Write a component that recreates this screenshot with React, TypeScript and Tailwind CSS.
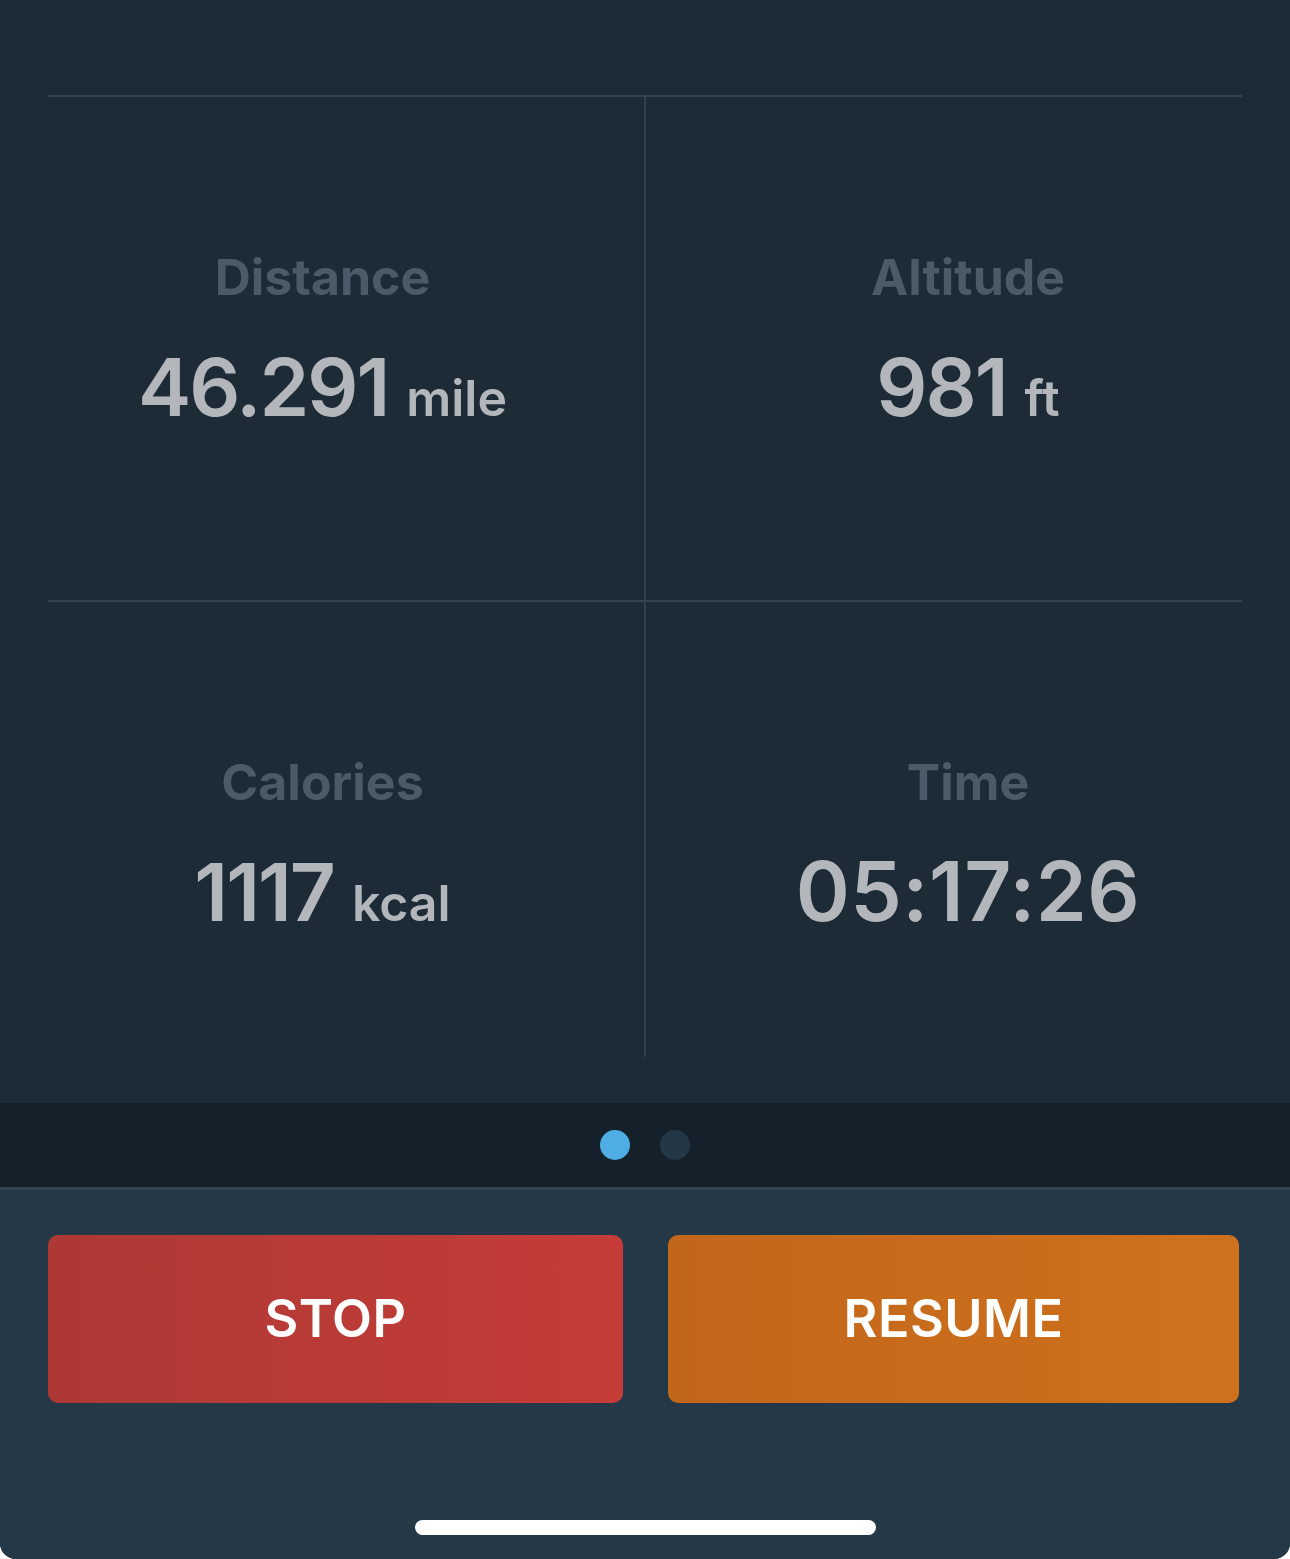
import React from "react";

function Stat({
  label,
  value,
  unit,
  wide,
}: {
  label: string;
  value: string;
  unit?: string;
  wide?: boolean;
}) {
  return (
    <div className="flex flex-col items-center pt-[155px]">
      <div className="text-[50px] leading-[50px] font-bold text-[#4a5a67]">{label}</div>
      <div className="mt-[45px] flex items-baseline text-[#b3b7bb]">
        <span
          className={
            wide
              ? "text-[82px] leading-[80px] font-semibold tracking-[0.5px]"
              : "text-[80px] leading-[80px] font-semibold tracking-[-2px]"
          }
        >
          {value}
        </span>
        {unit && <span className="ml-[18px] text-[50px] leading-[50px] font-semibold">{unit}</span>}
      </div>
    </div>
  );
}

export default function App() {
  return (
    <div
      className="w-[1290px] h-[1559px] flex flex-col overflow-hidden rounded-b-[16px] bg-[#1c2b37]"
      style={{ fontFamily: "Inter, 'Noto Sans', sans-serif" }}
    >
      {/* stats area */}
      <div className="h-[1103px] bg-[#1c2b36] pt-[95px]">
        <div className="mx-[48px] border-t-2 border-[#334451]">
          <div className="grid grid-cols-2 -mx-[48px]">
            <div className="h-[503px]">
              <Stat label="Distance" value="46.291" unit="mile" />
            </div>
            <div className="h-[503px] border-l-2 border-[#2f3f4b] -ml-[1px]">
              <Stat label="Altitude" value="981" unit="ft" />
            </div>
          </div>
          <div className="border-t-2 border-[#334451]" />
          <div className="grid grid-cols-2 -mx-[48px]">
            <div className="h-[455px]">
              <Stat label="Calories" value="1117" unit="kcal" />
            </div>
            <div className="h-[455px] border-l-2 border-[#2f3f4b] -ml-[1px]">
              <Stat label="Time" value="05:17:26" wide />
            </div>
          </div>
        </div>
      </div>

      {/* page dots */}
      <div className="h-[84px] bg-[#15212a] flex items-center justify-center gap-[30px]">
        <div className="w-[30px] h-[30px] rounded-full bg-[#4eade2]" />
        <div className="w-[30px] h-[30px] rounded-full bg-[#243746]" />
      </div>
      <div className="h-[3px] bg-[#33434f]" />

      {/* controls */}
      <div className="flex-1 bg-[#243847] flex flex-col">
        <div className="flex pl-[48px] pt-[45px] gap-[45px]">
          <button className="w-[575px] h-[168px] rounded-[10px] bg-gradient-to-r from-[#ad3934] to-[#c53c38] text-white text-[52px] font-semibold tracking-[0.5px]">
            STOP
          </button>
          <button className="w-[571px] h-[168px] rounded-[10px] bg-gradient-to-r from-[#c2661a] to-[#cf711c] text-white text-[52px] font-semibold tracking-[0.5px]">
            RESUME
          </button>
        </div>
        <div className="flex-1" />
        <div className="flex justify-center pb-[24px]">
          <div className="w-[461px] h-[15px] rounded-full bg-white" />
        </div>
      </div>
    </div>
  );
}
